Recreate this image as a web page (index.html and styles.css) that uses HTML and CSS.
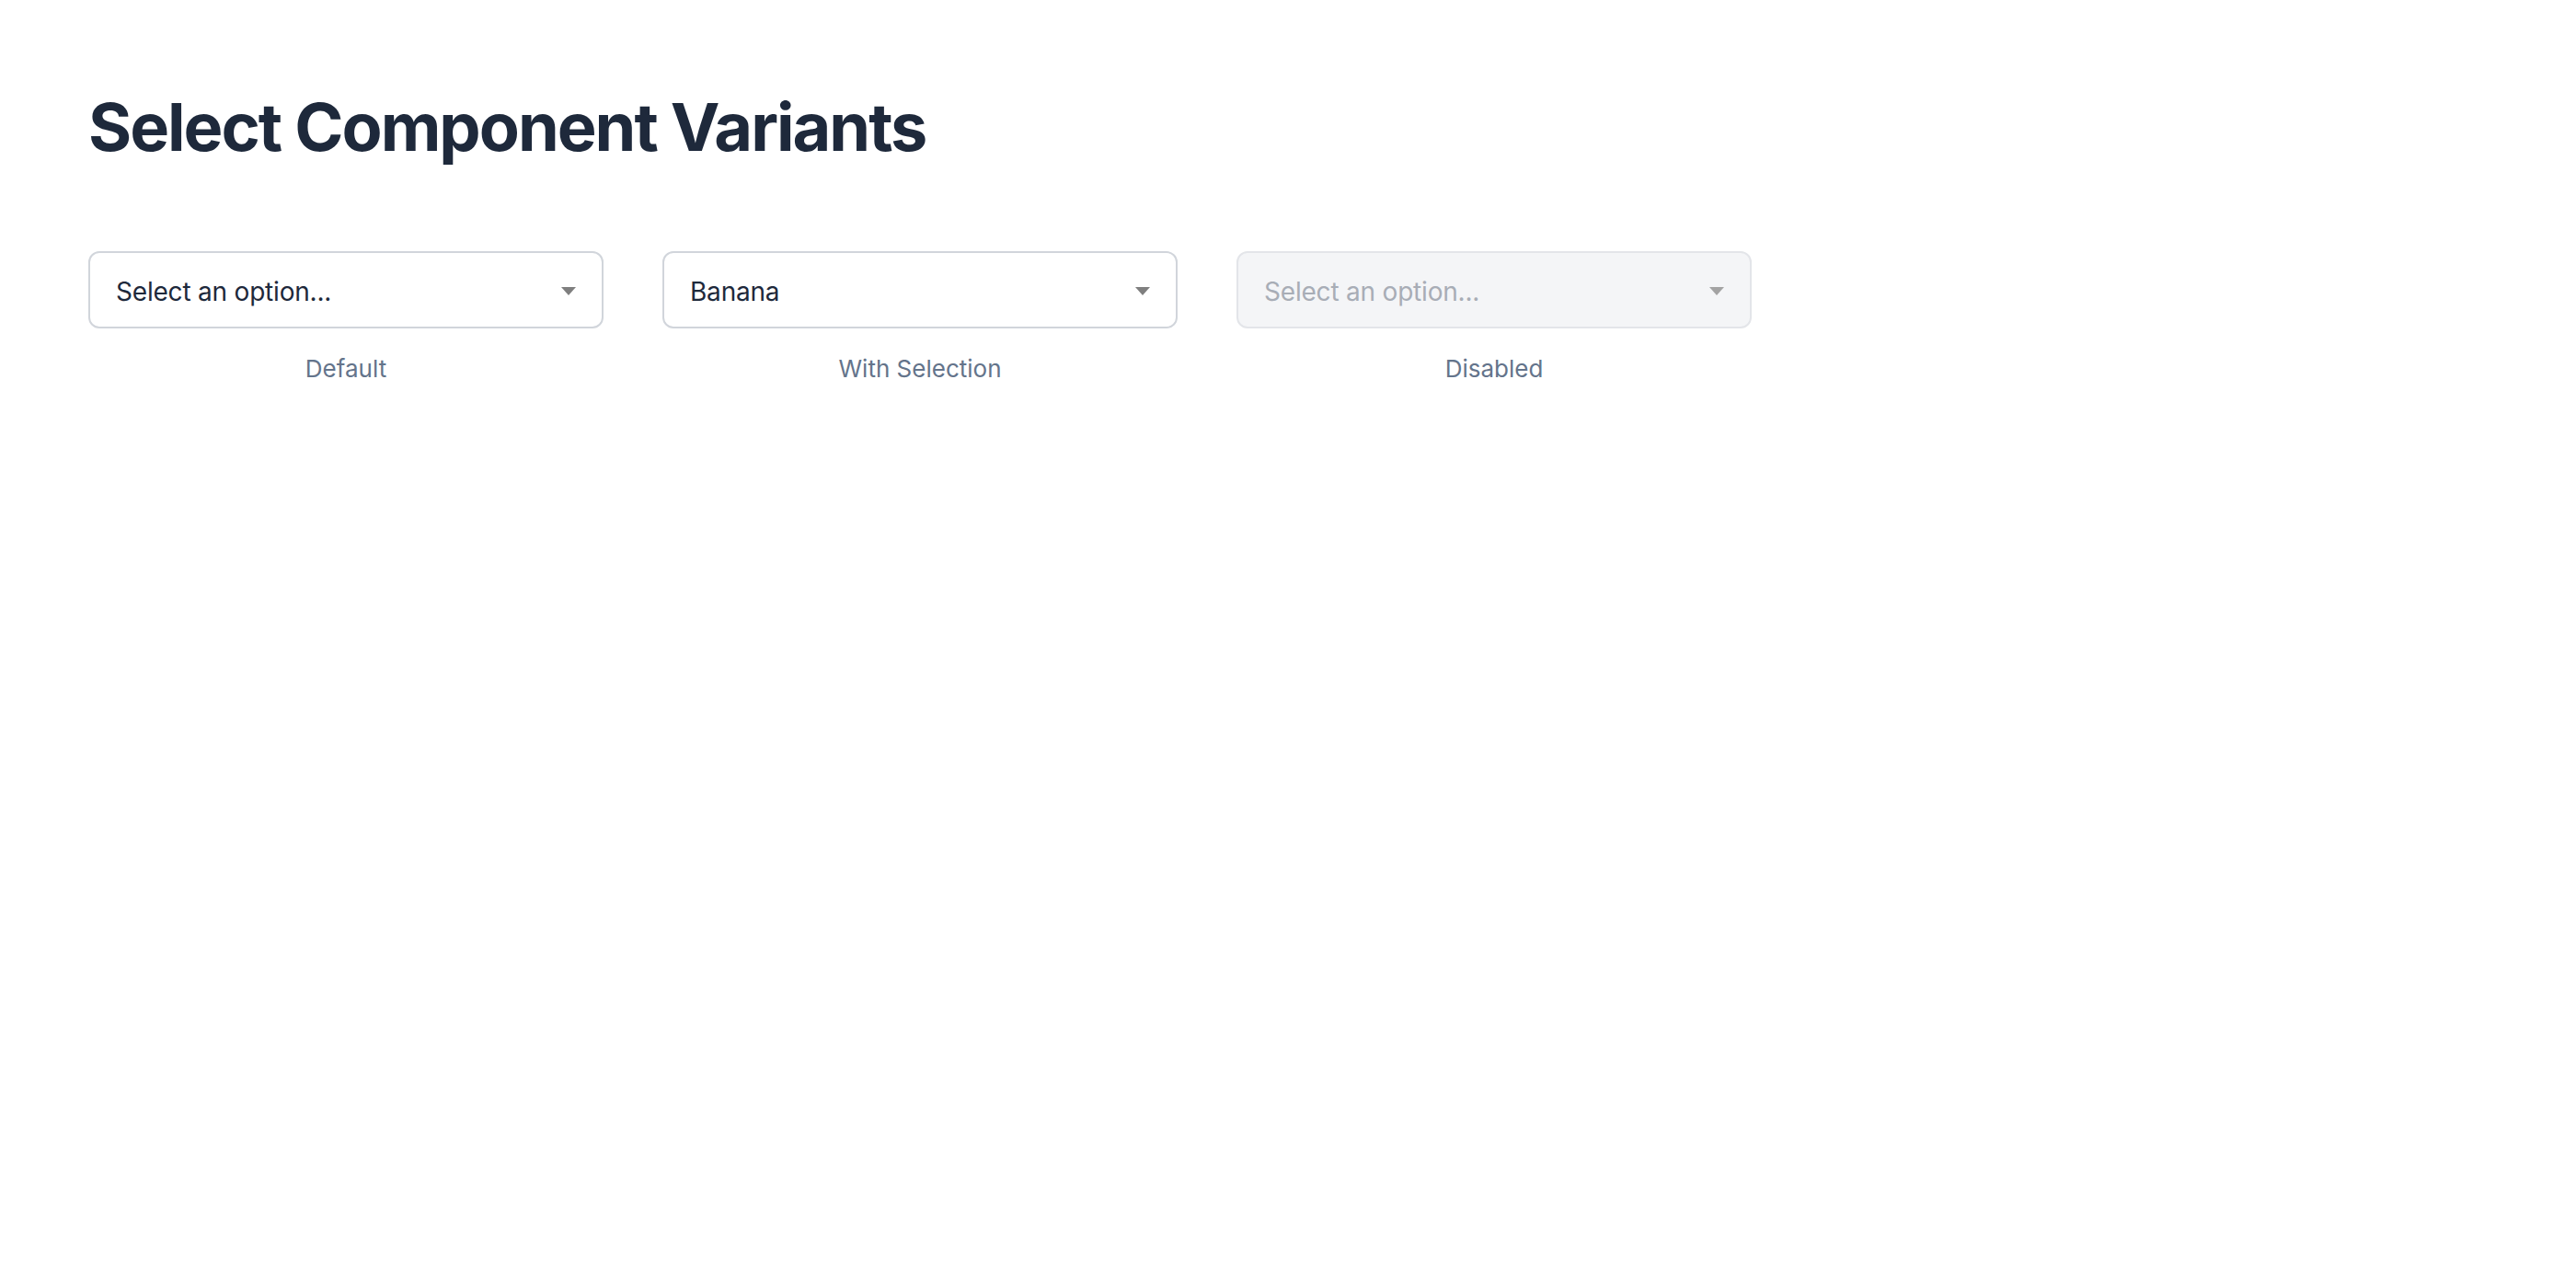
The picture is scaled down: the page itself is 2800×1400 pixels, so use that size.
FILE: index.html
```html
<!DOCTYPE html>
<html lang="en">
<head>
<meta charset="utf-8">
<title>Select Component Variants</title>
<link rel="stylesheet" href="styles.css">
</head>
<body>
<main class="page">
  <h1 class="title">Select Component Variants</h1>
  <div class="variants">
    <div class="field">
      <div class="select">
        <span class="select-value placeholder">Select an option...</span>
        <span class="caret"></span>
      </div>
      <div class="label">Default</div>
    </div>
    <div class="field">
      <div class="select">
        <span class="select-value">Banana</span>
        <span class="caret"></span>
      </div>
      <div class="label">With Selection</div>
    </div>
    <div class="field">
      <div class="select disabled">
        <span class="select-value">Select an option...</span>
        <span class="caret"></span>
      </div>
      <div class="label">Disabled</div>
    </div>
  </div>
</main>
</body>
</html>
```

FILE: styles.css
```css
* { box-sizing: border-box; }
html, body { margin: 0; padding: 0; background: #ffffff; }
body {
  font-family: Inter, "Noto Sans", "Liberation Sans", sans-serif;
  color: #1e293b;
}
.page {
  padding: 98px 96px;
}
.title {
  margin: 0 0 95px;
  font-size: 72px;
  line-height: 80px;
  font-weight: 700;
  color: #1e293b;
  letter-spacing: -2px;
}
.variants {
  display: flex;
  gap: 64px;
}
.field {
  width: 560px;
  display: flex;
  flex-direction: column;
}
.select {
  height: 84px;
  border: 2px solid #d1d5db;
  border-radius: 12px;
  background: #ffffff;
  padding: 0 28px;
  display: flex;
  align-items: center;
  justify-content: space-between;
}
.select-value {
  font-size: 28px;
  line-height: 40px;
  padding-top: 3px;
  letter-spacing: -0.2px;
  color: #1e293b;
}
.caret {
  width: 0;
  height: 0;
  border-left: 8px solid transparent;
  border-right: 8px solid transparent;
  border-top: 9px solid #7f7f7f;
  margin-top: 3px;
}
.select.disabled {
  background: #f4f5f7;
  border-color: #e3e5e9;
}
.select.disabled .select-value { color: #a8adb6; }
.select.disabled .caret { border-top-color: #a3a3a3; }
.label {
  margin-top: 28px;
  text-align: center;
  font-size: 26px;
  line-height: 32px;
  color: #64748b;
}
```
